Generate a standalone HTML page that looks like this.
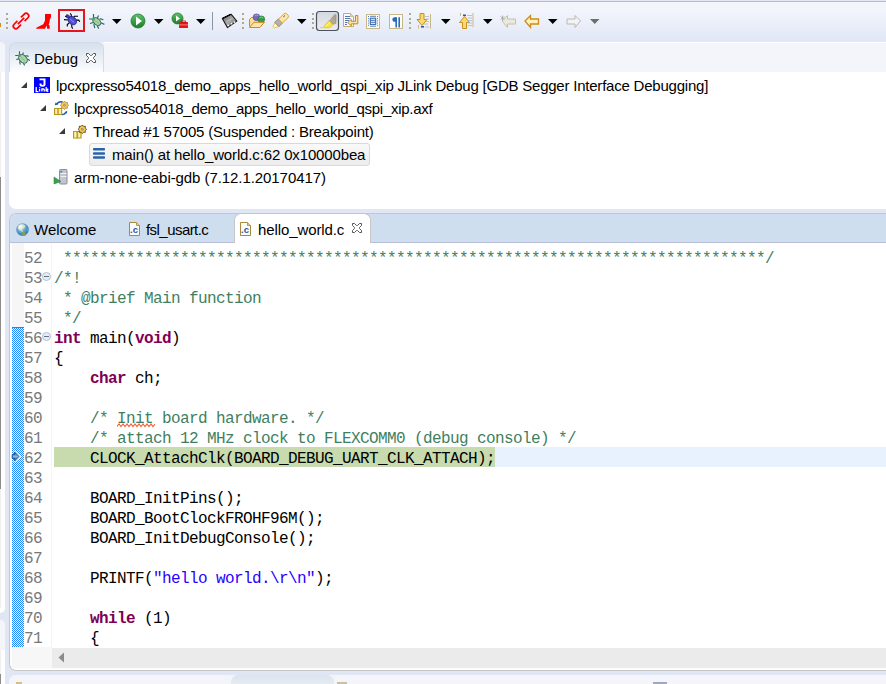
<!DOCTYPE html>
<html><head><meta charset="utf-8">
<style>
*{margin:0;padding:0;box-sizing:border-box}
html,body{width:886px;height:684px;overflow:hidden;background:#e1e6f4;font-family:"Liberation Sans",sans-serif}
.abs{position:absolute}
#tb{left:0;top:1px;width:886px;height:41px;background:linear-gradient(#f4f5f9 0px,#f2f5fc 8px,#e9edf8 25px,#dfe5f5 41px);border-top:1px solid #b5bccc}
#tb0{left:0;top:0;width:886px;height:1px;background:#e2e8f5}
.sep{position:absolute;top:13px;width:2px;height:16px;background:repeating-linear-gradient(#a89d80 0 2px,transparent 2px 4px)}
.dd{position:absolute;top:19px;width:0;height:0;border-left:5px solid transparent;border-right:5px solid transparent;border-top:5px solid #000}
/* debug panel */
#dbg{left:9px;top:42px;width:877px;height:167px;background:#fff;border-radius:7px 0 0 7px}
#dbgh{left:9px;top:42px;width:877px;height:30px;background:#f3f5fa;border-radius:7px 0 0 0}
#dbgtab{left:9px;top:42px;width:95px;height:30px;background:linear-gradient(#d5e0ec,#fdfdfe);border:1px solid #d6dae2;border-bottom:none;border-radius:6px 6px 0 0}
.tree{position:absolute;font-size:15px;color:#000;white-space:nowrap;line-height:18px}
.tri{position:absolute;width:0;height:0;border-left:6px solid transparent;border-bottom:6px solid #404040}
/* left strip */
#lstrip{left:0;top:42px;width:5px;height:609px;background:#fff;border-left:1px solid #8a8a8a;border-radius:0 5px 5px 0}
/* editor */
#ed{left:9px;top:213px;width:877px;height:458px;background:#fff;border:1px solid #c6c6c6;border-right:none;border-radius:7px 0 0 7px;overflow:hidden}
#edtabs{left:10px;top:214px;width:876px;height:29px;background:#cfdeee;border-bottom:1px solid #b8bfd6;border-radius:6px 0 0 0}
#acttab{left:234px;top:213px;width:137px;height:30px;background:#fff;border:1px solid #c6c6c6;border-bottom:none;border-radius:7px 7px 0 0}
.code{position:absolute;left:54px;margin-top:2px;letter-spacing:-0.6px;font-family:"Liberation Mono",monospace;font-size:16px;line-height:20px;white-space:pre;color:#000}
.ln{position:absolute;left:24px;margin-top:2px;letter-spacing:-0.6px;width:18px;font-family:"Liberation Mono",monospace;font-size:16px;line-height:20px;color:#787878;white-space:pre}
.cm{color:#3f7f5f}
.kw{color:#7f0055;font-weight:bold}
.st{color:#2a00ff}
#bot{left:9px;top:675px;width:877px;height:20px;background:#f3f5fa;border-radius:7px 0 0 0}
</style></head><body>
<div id="tb0" class="abs"></div>
<div id="tb" class="abs"></div>
<svg class="abs" style="left:0;top:0" width="886" height="42" viewBox="0 0 886 42">
<rect x="0" y="23" width="1" height="4" fill="#c8901a"/>
<rect x="6" y="13" width="2" height="2" fill="#b0a78e"/><rect x="6" y="18" width="2" height="2" fill="#b0a78e"/><rect x="6" y="22" width="2" height="2" fill="#b0a78e"/><rect x="6" y="27" width="2" height="2" fill="#b0a78e"/>
<g fill="none" stroke="#f00" stroke-width="1.7">
<path transform="translate(21 21) rotate(-45)" d="M2.5 -2.6H7.2A2.6 2.6 0 0 1 7.2 2.6H2.5M-2.5 2.6H-7.2A2.6 2.6 0 0 1 -7.2 -2.6H-2.5M-4.5 0H4.5"/>
</g>
<path d="M45 14H51V17.4L49.9 19.3L49.5 22.2L48.7 24.8L49.7 25.8V28.7H47.1L46.8 25.4L44.9 28.7H36L36.8 27.4L43.3 24.2L45 20.6Z" fill="#f00"/>
<rect x="59" y="10" width="25" height="21" fill="none" stroke="#e8141c" stroke-width="2"/>
<g stroke="#000" stroke-width="1.1" fill="none">
<path d="M70.2 13.3L71.2 14.6L71.5 17M65.1 16.4H68M67 14.3V17.5M73.8 17.2L74.4 16.2H78M64 19.6L68 20M75.7 20.1H78.7L79.8 21.8M69.2 23L67.3 24.6V26.6M71.6 24.6L71.9 27.3L72.8 28.6"/>
</g>
<ellipse cx="72.3" cy="20.6" rx="4.7" ry="3.7" transform="rotate(45 72.3 20.6)" fill="#4c4cd4" stroke="#1c1c80" stroke-width="0.8"/>
<circle cx="68" cy="16.6" r="1.6" fill="#4040c0" stroke="#1c1c80" stroke-width="0.5"/>
<path d="M70.3 19.2l4 3.4" stroke="#9aa0f4" stroke-width="1"/>
<g stroke="#2f6a66" stroke-width="1.2" fill="none">
<path d="M93.5 14v4.5M98.5 15.5l-1.2 2.8M89 19h4M99.8 18.6l3.6 1.2M90 23.5l3.2-1M100.8 22.8l3.6 1.6M93.8 24.2l1 4M97.2 25.8l1.6 2.8"/>
</g>
<ellipse cx="96.8" cy="21.6" rx="4.6" ry="3.1" transform="rotate(42 96.8 21.6)" fill="#add3a4" stroke="#2f6a66" stroke-width="1"/>
<path d="M94.5 20l4.5 3.5" stroke="#78a880" stroke-width="0.7"/>
<circle cx="93.5" cy="19" r="1.6" fill="#5a9a70"/>
<path d="M112 19h9.5l-4.75 5z" fill="#000"/>
<defs><linearGradient id="gp" x1="0" y1="0" x2="0" y2="1"><stop offset="0" stop-color="#5cc46a"/><stop offset="1" stop-color="#1c7a2c"/></linearGradient></defs>
<circle cx="138" cy="21" r="7" fill="url(#gp)" stroke="#237a30" stroke-width="0.8"/>
<path d="M136 16.5v9l6-4.5z" fill="#fff"/>
<path d="M154 19h9.5l-4.75 5z" fill="#000"/>
<circle cx="177.5" cy="18.5" r="5.5" fill="url(#gp)" stroke="#237a30" stroke-width="0.8"/>
<path d="M176 15.5v6l4-3z" fill="#fff"/>
<rect x="179" y="22" width="9" height="6" fill="#e01818" rx="0.5"/>
<rect x="181.5" y="21" width="4" height="1.5" fill="none" stroke="#c01010" stroke-width="0.8"/>
<rect x="179" y="24.5" width="9" height="0.8" fill="#ff9090"/>
<path d="M196 19h9.5l-4.75 5z" fill="#000"/>
<rect x="212" y="12" width="1" height="18" fill="#8a96a6"/>
<defs><linearGradient id="chp" x1="0" y1="0" x2="1" y2="1"><stop offset="0" stop-color="#6a6a6a"/><stop offset="0.5" stop-color="#a8a8a8"/><stop offset="1" stop-color="#6a6a6a"/></linearGradient></defs>
<path d="M222.3 18.6L231 14.2L236.8 21L227.4 27.6Z" fill="url(#chp)" stroke="#161616" stroke-width="1.1" stroke-linejoin="round"/>
<path d="M223 18.3L230.6 14.4" stroke="#000" stroke-width="1.6" stroke-dasharray="1.3 0.9"/>
<path d="M226.5 21.5L231.5 19" stroke="#c8c8c8" stroke-width="0.8"/>
<circle cx="228.2" cy="25.3" r="0.9" fill="#f8f8f8"/><circle cx="231.5" cy="23.6" r="0.9" fill="#f8f8f8"/><circle cx="234.5" cy="22.1" r="0.9" fill="#f8f8f8"/>
<rect x="242" y="13" width="2" height="2" fill="#b0a78e"/><rect x="242" y="18" width="2" height="2" fill="#b0a78e"/><rect x="242" y="22" width="2" height="2" fill="#b0a78e"/><rect x="242" y="27" width="2" height="2" fill="#b0a78e"/>
<path d="M249.5 26.5V19.5L251.5 17.5H254.5L255.5 19H262V22.5" fill="#f8e0a0" stroke="#c88a28" stroke-width="1"/>
<circle cx="256.5" cy="17.3" r="3.4" fill="#7a68c0" stroke="#5a4898" stroke-width="0.6"/>
<path d="M254.5 15.8a2.5 1.2 0 0 1 4 0" stroke="#b0a4e0" stroke-width="0.8" fill="none"/>
<circle cx="261.3" cy="19.3" r="3.4" fill="#3a9a48" stroke="#207030" stroke-width="0.6"/>
<path d="M259.3 17.8a2.5 1.2 0 0 1 4 0" stroke="#90d090" stroke-width="0.8" fill="none"/>
<path d="M249.5 27.5L253.8 22.3H264.5L259.8 27.5Z" fill="#fbe4a4" stroke="#c88a28" stroke-width="1" stroke-linejoin="round"/>
<g transform="translate(273.5 27.5) rotate(-43)">
<path d="M0 -0.8L4.5 -2.7V2.7L0 0.8Z" fill="#fff6c0" stroke="#e0b838" stroke-width="0.7"/>
<path d="M4.5 -3H9.5V3H4.5Z" fill="#b4b0ac" stroke="#8a7a68" stroke-width="0.7"/>
<path d="M9.5 -2.8H17Q19 -2.8 19 -1V1Q19 2.8 17 2.8H9.5Z" fill="#fbe8a8" stroke="#e8a020" stroke-width="0.9"/>
<circle cx="14.8" cy="-0.9" r="0.5" fill="#2040a0"/><circle cx="16" cy="-0.9" r="0.5" fill="#2040a0"/>
</g>
<path d="M297 19h9.5l-4.75 5z" fill="#000"/>
<rect x="312" y="13" width="2" height="2" fill="#b0a78e"/><rect x="312" y="18" width="2" height="2" fill="#b0a78e"/><rect x="312" y="22" width="2" height="2" fill="#b0a78e"/><rect x="312" y="27" width="2" height="2" fill="#b0a78e"/>
<defs><linearGradient id="pb" x1="0" y1="0" x2="0" y2="1"><stop offset="0" stop-color="#d4d8e2"/><stop offset="1" stop-color="#ececec"/></linearGradient></defs>
<rect x="316.5" y="11.5" width="22" height="19" rx="3" fill="url(#pb)" stroke="#4c535c" stroke-width="1.2"/>
<path d="M335 14.2L336.2 15.2L336 23.3L332.6 24.6L329.2 20.8Z" fill="#aaa48e" stroke="#8e8872" stroke-width="0.5"/>
<path d="M331 17l4 5M330 19l4.5 4.5" stroke="#c8c4b0" stroke-width="0.6"/>
<path d="M329.2 20.6L332.8 24.6L330.2 27.6L324.6 27.8L324 26Z" fill="#f8e040" stroke="#d4b818" stroke-width="0.6"/>
<path d="M325.5 26.5L330 22.5" stroke="#fff8a0" stroke-width="1"/>
<path d="M320 27.6h5" stroke="#f0d028" stroke-width="1"/>
<path d="M343.5 13.5H350.5L353.5 16.5V26.5H343.5Z" fill="#f8f9fc" stroke="#c4ac70" stroke-width="1"/>
<path d="M350.5 13.5V16.5H353.5" fill="#e8d8a8" stroke="#c4ac70" stroke-width="0.7"/>
<path d="M345 16.5h5M345 18.5h5.5M345 20.5h4M345 22.5h2M345 24.5h2" stroke="#5a78b0" stroke-width="1"/>
<path d="M355.5 15.5H357.8V23.8H351.3V25.8L347.6 22.6L351.3 19.5V21.3H355.5Z" fill="#fce8a0" stroke="#c88818" stroke-width="1" stroke-linejoin="round"/>
<rect x="366.5" y="14.5" width="13" height="14" fill="#fafbfd" stroke="#c8b888" stroke-width="1"/>
<path d="M368.5 16v11M377.5 16v11" stroke="#5a80c0" stroke-width="1" stroke-dasharray="1 1.2"/>
<path d="M370 16.3h6M370 26.2h6" stroke="#4a70b0" stroke-width="0.9"/>
<rect x="370.3" y="18.2" width="5.4" height="6.2" fill="#f0f4fa" stroke="#2a62a8" stroke-width="1"/>
<path d="M370.5 20.3h5M370.5 22.3h5" stroke="#2a62a8" stroke-width="0.9"/>
<rect x="389.5" y="14.5" width="13" height="14" fill="#fafbfd" stroke="#c8b888" stroke-width="1"/>
<path d="M396.2 17.2V27.5M399.2 17.2V27.5" stroke="#2a6ab8" stroke-width="1.6"/>
<path d="M400 17.2H395A2.6 2.3 0 0 0 395 21.8H396.2V17.2Z" fill="#2a6ab8"/>
<rect x="409" y="13" width="2" height="2" fill="#b0a78e"/><rect x="409" y="18" width="2" height="2" fill="#b0a78e"/><rect x="409" y="22" width="2" height="2" fill="#b0a78e"/><rect x="409" y="27" width="2" height="2" fill="#b0a78e"/>
<path d="M420 13.5h4v6h3l-5 6-5-6h3z" fill="#fbd870" stroke="#c8901c" stroke-width="1"/>
<path d="M425 16.5h4M426 19h3M426 21.5h3M424 24h4" stroke="#b0c0d8" stroke-width="0.9"/>
<rect x="421" y="26" width="3" height="1.6" fill="#2a5aa0"/>
<path d="M425 27h4" stroke="#b0c0d8" stroke-width="0.9"/>
<path d="M430.5 14v14.5M418.5 25v3.5" stroke="#c8b888" stroke-width="1"/>
<path d="M441 19h9.5l-4.75 5z" fill="#000"/>
<path d="M462.5 28.5h4v-6h3l-5-6-5 6h3z" fill="#fbd870" stroke="#c8901c" stroke-width="1"/>
<rect x="463" y="14.5" width="3" height="1.6" fill="#2a5aa0"/>
<path d="M467 15.5h5M468 18h4M468 20.5h4M468 23h4M468 25.5h4" stroke="#b0c0d8" stroke-width="0.9"/>
<path d="M473 13v14M460.5 13v3" stroke="#c8b888" stroke-width="1"/>
<path d="M483 19h9.5l-4.75 5z" fill="#000"/>
<path d="M502 21l5.5-5.5v3.5h8v5h-8v3.5z" fill="#ebe8dc" stroke="#c4c0b0" stroke-width="1"/>
<path d="M500.5 16.5l4 3M504.5 16.5l-4 3M502.5 15.5v5" stroke="#a0a0a0" stroke-width="0.7"/>
<path d="M525 21l5.5-5.5v3.5h8v5h-8v3.5z" fill="#fff2b8" stroke="#d08a18" stroke-width="1.3"/>
<path d="M548 19h9.5l-4.75 5z" fill="#000"/>
<path d="M580.5 21l-5.5-5.5v3.5h-8v5h8v3.5z" fill="#f2f2f2" stroke="#b8b8b8" stroke-width="1"/>
<path d="M590 19h9.5l-4.75 5z" fill="#6e6e6e"/>
</svg>

<div class="abs" style="left:0;top:42px;width:5px;height:571px;background:#fff;border-radius:0 5px 5px 0"></div>
<div class="abs" style="left:0;top:42px;width:5px;height:30px;background:#f4f5fa;border-radius:0 5px 0 0"></div>
<div class="abs" style="left:0;top:72px;width:1px;height:105px;background:#efefef"></div>
<div class="abs" style="left:0;top:177px;width:1px;height:312px;background:#8c8c8c"></div>
<div class="abs" style="left:0;top:489px;width:1px;height:119px;background:#efefef"></div>
<div class="abs" style="left:0;top:620px;width:5px;height:64px;background:#fff;border-radius:0 5px 0 0"></div>
<div class="abs" style="left:0;top:620px;width:5px;height:30px;background:#f4f5fa;border-radius:0 5px 0 0"></div>
<div class="abs" style="left:0;top:650px;width:1px;height:24px;background:#efefef"></div>
<div class="abs" style="left:0;top:674px;width:1px;height:10px;background:#8c8c8c"></div>
<div id="dbg" class="abs"></div>
<div id="dbgh" class="abs"></div>
<div class="abs" style="left:104px;top:42px;width:782px;height:1px;background:#fff"></div>
<div id="dbgtab" class="abs"></div>
<div class="tree" style="left:34px;top:50px">Debug</div>
<svg class="abs" style="left:15px;top:51px" width="16" height="16" viewBox="0 0 16 16">
<g stroke="#2f6a66" stroke-width="1.1" fill="none">
<path d="M4.5 0.3v3.8M8.5 1.5l-1.1 2.3M0.2 4.5h3.6M10.6 4.5l3.1 0.9M1.3 8.5l2.5-0.6M12.1 8.1l2.8 1.3M4.5 10.3l0.9 3.2M8.3 12.2l1.4 2.2"/>
</g>
<ellipse cx="8" cy="7.8" rx="5" ry="3.5" transform="rotate(45 8 7.8)" fill="#acd3a2" stroke="#2f6a66" stroke-width="1"/>
<path d="M6 6l4 4" stroke="#7ab080" stroke-width="0.8"/>
<circle cx="4.5" cy="4.5" r="1.5" fill="#5a9a70"/>
</svg>
<svg class="abs" style="left:86px;top:53px" width="10" height="10" viewBox="0 0 10 10"><path d="M0.5 0.5H2.5L4.5 2.5H5.5L7.5 0.5H9.5V2.5L7.5 4.5V5.5L9.5 7.5V9.5H7.5L5.5 7.5H4.5L2.5 9.5H0.5V7.5L2.5 5.5V4.5L0.5 2.5Z" fill="#fff" stroke="#555" stroke-width="1"/></svg>
<svg class="abs" style="left:21px;top:82px" width="7" height="7" viewBox="0 0 7 7"><path d="M0 6H6V0z" fill="#3a3a3a"/></svg>
<svg class="abs" style="left:34px;top:77px" width="16" height="16" viewBox="0 0 16 16">
<rect width="16" height="16" fill="#0000ff"/>
<path d="M5.5 1.5H11.5V7.5Q11.5 9.7 8.5 9.7Q5.5 9.7 5.5 7.5V6.5H7.5V7.3Q7.5 8 8.5 8Q9.5 8 9.5 7.3V3.2H5.5Z" fill="#fff"/>
<path d="M2.2 10v4.6h2.2M5.6 12v2.6M5.6 10.2v1M7.9 14.6V12h1.5q0.9 0 0.9 0.9v1.7M12.2 10v4.6M14.3 11.9l-2 1.3 2 1.4" fill="none" stroke="#fff" stroke-width="1.3"/>
</svg>
<svg class="abs" style="left:40px;top:105px" width="7" height="7" viewBox="0 0 7 7"><path d="M0 6H6V0z" fill="#3a3a3a"/></svg>
<svg class="abs" style="left:54px;top:100px" width="16" height="16" viewBox="0 0 16 16">
<defs><linearGradient id="bar" x1="0" x2="1"><stop offset="0" stop-color="#e8c850"/><stop offset="0.5" stop-color="#fff8c8"/><stop offset="1" stop-color="#e8c850"/></linearGradient></defs>
<path d="M8.5 1.8Q5 1.2 2.8 3.8" fill="none" stroke="#1a56a0" stroke-width="1.4"/>
<path d="M0.8 5.2L1.6 2.4L4.4 4.4z" fill="#1a56a0"/>
<path d="M7.5 14.6Q10.6 14.8 11.8 12.6" fill="none" stroke="#1a56a0" stroke-width="1.4"/>
<path d="M13.2 10.8L13 13.6L10.4 12.2z" fill="#1a56a0"/>
<rect x="0.5" y="8.5" width="3.6" height="6" fill="url(#bar)" stroke="#b8961e" stroke-width="1"/>
<rect x="4.1" y="8.5" width="3.6" height="6" fill="url(#bar)" stroke="#b8961e" stroke-width="1"/>
<polygon points="10.50,1.10 11.69,2.44 13.47,2.33 13.36,4.11 14.70,5.30 13.36,6.49 13.47,8.27 11.69,8.16 10.50,9.50 9.31,8.16 7.53,8.27 7.64,6.49 6.30,5.30 7.64,4.11 7.53,2.33 9.31,2.44" fill="#f8c848" stroke="#9a7a58" stroke-width="0.7"/>
<circle cx="10.5" cy="5.3" r="1" fill="#c8c8d0" stroke="#706050" stroke-width="0.5"/>
</svg>
<svg class="abs" style="left:59px;top:128px" width="7" height="7" viewBox="0 0 7 7"><path d="M0 6H6V0z" fill="#3a3a3a"/></svg>
<svg class="abs" style="left:72px;top:124px" width="16" height="16" viewBox="0 0 16 16">
<rect x="1.5" y="7.5" width="3.8" height="6.5" fill="url(#bar)" stroke="#b8961e" stroke-width="1"/>
<rect x="5.3" y="7.5" width="3.8" height="6.5" fill="url(#bar)" stroke="#b8961e" stroke-width="1"/>
<polygon points="10.30,1.00 11.52,2.34 13.34,2.26 13.26,4.08 14.60,5.30 13.26,6.52 13.34,8.34 11.52,8.26 10.30,9.60 9.08,8.26 7.26,8.34 7.34,6.52 6.00,5.30 7.34,4.08 7.26,2.26 9.08,2.34" fill="#f8c848" stroke="#4a3020" stroke-width="0.8"/>
<circle cx="10.3" cy="5.3" r="1" fill="#c8c8d0" stroke="#605040" stroke-width="0.5"/>
</svg>
<div class="abs" style="left:89px;top:143px;width:281px;height:23px;border:1px solid #d9d9d9;border-radius:3px;background:linear-gradient(#f9f9f9,#ececec)"></div>
<svg class="abs" style="left:93px;top:147px" width="13" height="13" viewBox="0 0 13 13">
<rect x="0" y="1" width="12" height="2.6" rx="0.8" fill="#2a64a8"/><rect x="0" y="5.2" width="12" height="2.6" rx="0.8" fill="#2a64a8"/><rect x="0" y="9.2" width="12" height="2.6" rx="0.8" fill="#2a64a8"/>
</svg>
<svg class="abs" style="left:53px;top:168px" width="16" height="17" viewBox="0 0 16 17">
<rect x="6.5" y="1.5" width="7.5" height="14.5" rx="1" fill="#c0c4d4" stroke="#90907c" stroke-width="1"/>
<path d="M7.5 5.5h6M7.5 8.5h6" stroke="#f0f0f4" stroke-width="1"/>
<path d="M7.5 2.5l2.5 1.2-2.5 1.3z" fill="#3a9a48"/>
<path d="M1 9l7 4.5L1 16z" fill="#3aa050" stroke="#2a7a38" stroke-width="0.5"/>
</svg>

<div class="tree" style="left:56px;top:77px;letter-spacing:-0.22px">lpcxpresso54018_demo_apps_hello_world_qspi_xip JLink Debug [GDB Segger Interface Debugging]</div>
<div class="tree" style="left:74px;top:100px;letter-spacing:-0.27px">lpcxpresso54018_demo_apps_hello_world_qspi_xip.axf</div>
<div class="tree" style="left:93px;top:123px;letter-spacing:-0.2px">Thread #1 57005 (Suspended : Breakpoint)</div>
<div class="tree" style="left:112px;top:146px;letter-spacing:-0.14px">main() at hello_world.c:62 0x10000bea</div>
<div class="tree" style="left:74px;top:169px;letter-spacing:-0.07px">arm-none-eabi-gdb (7.12.1.20170417)</div>

<div id="ed" class="abs"></div>
<div id="edtabs" class="abs"></div>
<div id="acttab" class="abs"></div>
<svg class="abs" style="left:16px;top:223px" width="14" height="14" viewBox="0 0 14 14">
<defs><radialGradient id="gl" cx="0.4" cy="0.35" r="0.75"><stop offset="0" stop-color="#bfe0f4"/><stop offset="0.55" stop-color="#4f9cd0"/><stop offset="1" stop-color="#2a64a0"/></radialGradient>
<radialGradient id="gl2" cx="0.3" cy="0.3" r="0.7"><stop offset="0" stop-color="#ffffff"/><stop offset="1" stop-color="#c8d4a0"/></radialGradient></defs>
<circle cx="6.5" cy="6.5" r="6.3" fill="url(#gl)"/>
<path d="M2.2 3.2C3.5 1.2 7 0.8 9.2 2.2L9.5 3.8 8 5.2 6.5 5.4 6.2 7 7 8.2 6 9 4.5 7.5 3 6.8 2 5.2z" fill="url(#gl2)"/>
<path d="M6 9.2L8.2 9 9.8 10.5 9.5 12.5 7.5 13 6.5 11.5z" fill="#8aa040"/>
<path d="M11.2 4.5l1 1.8-0.2 2.5-1-1.2z" fill="#8aa040"/>
</svg>
<svg class="abs" style="left:129px;top:222px" width="12" height="15" viewBox="0 0 12 15">
<path d="M0.5 0.5H7.5L10.5 3.5V13.5H0.5Z" fill="#fbfbfb" stroke="#a8883a" stroke-width="1"/>
<path d="M7.5 0.5V3.5H10.5" fill="#e0c888" stroke="#a8883a" stroke-width="0.8"/>
<text x="1" y="11" font-family="Liberation Sans" font-weight="bold" font-size="9.5" fill="#2a5a9a">.c</text>
</svg>
<svg class="abs" style="left:240px;top:222px" width="12" height="15" viewBox="0 0 12 15">
<path d="M0.5 0.5H7.5L10.5 3.5V13.5H0.5Z" fill="#fbfbfb" stroke="#a8883a" stroke-width="1"/>
<path d="M7.5 0.5V3.5H10.5" fill="#e0c888" stroke="#a8883a" stroke-width="0.8"/>
<text x="1" y="11" font-family="Liberation Sans" font-weight="bold" font-size="9.5" fill="#2a5a9a">.c</text>
</svg>
<svg class="abs" style="left:352px;top:223px" width="10" height="10" viewBox="0 0 10 10"><path d="M0.5 0.5H2.5L4.5 2.5H5.5L7.5 0.5H9.5V2.5L7.5 4.5V5.5L9.5 7.5V9.5H7.5L5.5 7.5H4.5L2.5 9.5H0.5V7.5L2.5 5.5V4.5L0.5 2.5Z" fill="#fff" stroke="#555" stroke-width="1"/></svg>
<div class="tree" style="left:34px;top:221px">Welcome</div>
<div class="tree" style="left:146px;top:221px;letter-spacing:-0.55px">fsl_usart.c</div>
<div class="tree" style="left:258px;top:221px;letter-spacing:-0.1px">hello_world.c</div>


<div class="abs" style="left:12px;top:243px;width:12px;height:404px;background:#f6f6f6"></div>
<div class="abs" style="left:51px;top:243px;width:1px;height:404px;background:#f4f4f4"></div>
<div class="abs" style="left:12px;top:327px;width:12px;height:320px;background:repeating-conic-gradient(#1c86ff 0 25%,#fff 0 50%) 0 0/2px 2px"></div>
<div class="abs" style="left:12px;top:327px;width:12px;height:1px;background:#1c86ff"></div>
<div class="abs" style="left:54px;top:447px;width:441px;height:20px;background:#c7dbae"></div>
<div class="abs" style="left:495px;top:447px;width:391px;height:20px;background:#e8f2fe"></div>
<svg class="abs" style="left:42px;top:272px" width="9" height="9"><circle cx="4.5" cy="4.5" r="4" fill="#e2eef9" stroke="#b3bfd0" stroke-width="1"/><rect x="2" y="4" width="5" height="1" fill="#687080"/></svg>
<svg class="abs" style="left:42px;top:332px" width="9" height="9"><circle cx="4.5" cy="4.5" r="4" fill="#e2eef9" stroke="#b3bfd0" stroke-width="1"/><rect x="2" y="4" width="5" height="1" fill="#687080"/></svg>
<svg class="abs" style="left:11px;top:450px" width="11" height="13" viewBox="0 0 11 13"><defs><linearGradient id="arw" x1="0" y1="0" x2="0" y2="1"><stop offset="0" stop-color="#1a5a98"/><stop offset="0.5" stop-color="#8cb4dc"/><stop offset="1" stop-color="#1a5a98"/></linearGradient></defs>
<path d="M3 1.2L8.8 6.5L3 11.8" fill="none" stroke="#fff" stroke-width="1.6"/>
<path d="M1.2 4.6H3.6V2L8 6.5L3.6 11V8.4H1.2Z" fill="url(#arw)" stroke="#0c4c8c" stroke-width="0.9" stroke-linejoin="miter"/></svg>
<svg class="abs" style="left:117px;top:423px" width="38" height="5"><polyline points="0,3.5 2,1 4,3.5 6,1 8,3.5 10,1 12,3.5 14,1 16,3.5 18,1 20,3.5 22,1 24,3.5 26,1 28,3.5 30,1 32,3.5 34,1 36,3.5 38,1" fill="none" stroke="#f4603c" stroke-width="1.1"/></svg>
<div class="ln" style="top:247px">52</div>
<div class="code" style="top:247px"><span class="cm"> ******************************************************************************/</span></div>
<div class="ln" style="top:267px">53</div>
<div class="code" style="top:267px"><span class="cm">/*!</span></div>
<div class="ln" style="top:287px">54</div>
<div class="code" style="top:287px"><span class="cm"> * @brief Main function</span></div>
<div class="ln" style="top:307px">55</div>
<div class="code" style="top:307px"><span class="cm"> */</span></div>
<div class="ln" style="top:327px">56</div>
<div class="code" style="top:327px"><span class="kw">int</span> main(<span class="kw">void</span>)</div>
<div class="ln" style="top:347px">57</div>
<div class="code" style="top:347px">{</div>
<div class="ln" style="top:367px">58</div>
<div class="code" style="top:367px">    <span class="kw">char</span> ch;</div>
<div class="ln" style="top:387px">59</div>
<div class="code" style="top:387px"></div>
<div class="ln" style="top:407px">60</div>
<div class="code" style="top:407px">    <span class="cm">/* <span class="sp">Init</span> board hardware. */</span></div>
<div class="ln" style="top:427px">61</div>
<div class="code" style="top:427px">    <span class="cm">/* attach 12 MHz clock to FLEXCOMM0 (debug console) */</span></div>
<div class="ln" style="top:447px">62</div>
<div class="code" style="top:447px">    CLOCK_AttachClk(BOARD_DEBUG_UART_CLK_ATTACH);</div>
<div class="ln" style="top:467px">63</div>
<div class="code" style="top:467px"></div>
<div class="ln" style="top:487px">64</div>
<div class="code" style="top:487px">    BOARD_InitPins();</div>
<div class="ln" style="top:507px">65</div>
<div class="code" style="top:507px">    BOARD_BootClockFROHF96M();</div>
<div class="ln" style="top:527px">66</div>
<div class="code" style="top:527px">    BOARD_InitDebugConsole();</div>
<div class="ln" style="top:547px">67</div>
<div class="code" style="top:547px"></div>
<div class="ln" style="top:567px">68</div>
<div class="code" style="top:567px">    PRINTF(<span class="st">"hello world.\r\n"</span>);</div>
<div class="ln" style="top:587px">69</div>
<div class="code" style="top:587px"></div>
<div class="ln" style="top:607px">70</div>
<div class="code" style="top:607px">    <span class="kw">while</span> (1)</div>
<div class="ln" style="top:627px">71</div>
<div class="code" style="top:627px">    {</div>
<div class="abs" style="left:12px;top:647px;width:40px;height:21px;background:#f7f7f7"></div>
<div class="abs" style="left:12px;top:668px;width:874px;height:1px;background:#fbfbfb"></div>
<div class="abs" style="left:52px;top:648px;width:834px;height:20px;background:#ebebeb"></div>
<svg class="abs" style="left:58px;top:652px" width="7" height="11"><path d="M6 0.5V10.5L0.5 5.5z" fill="#8a8a8a"/></svg>
<div id="bot" class="abs"></div>
<div class="abs" style="left:231px;top:675px;width:103px;height:12px;background:linear-gradient(#dce4ee,#e8edf4);border-radius:7px 7px 0 0"></div>
<div class="abs" style="left:337px;top:682px;width:10px;height:3px;background:#c9c0a0"></div>
<div class="abs" style="left:16px;top:682px;width:6px;height:2px;background:#d8c080"></div>
<div class="abs" style="left:653px;top:682px;width:14px;height:2px;background:#a0a6bc"></div>
</body></html>
